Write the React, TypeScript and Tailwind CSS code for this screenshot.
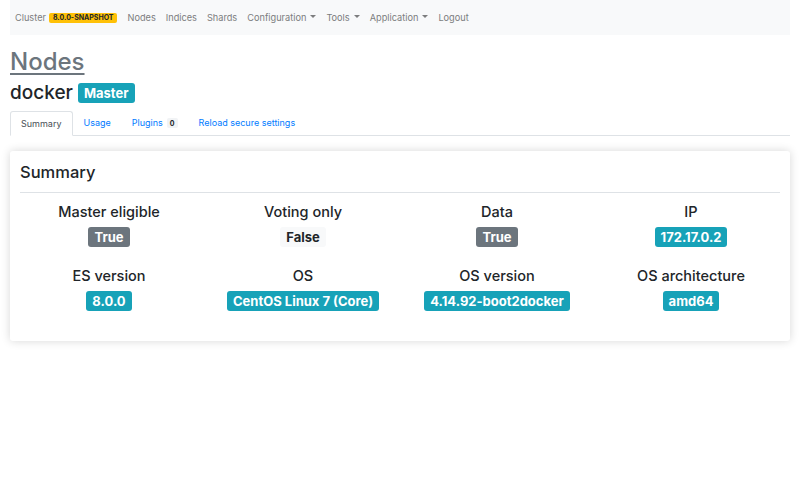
import React from "react";

const font = { fontFamily: 'Inter, "Liberation Sans", Arial, sans-serif' };

function Caret() {
  return (
    <span className="inline-block ml-[4px] w-0 h-0 border-t-[3px] border-t-current border-x-[3px] border-x-transparent align-middle relative top-[-1px]" />
  );
}

function NavLink({ children }: { children: React.ReactNode }) {
  return <span className="px-[5px] text-[9.2px] text-[#7c7d7e] flex items-center whitespace-nowrap">{children}</span>;
}

type Item = { label: string; value: string; kind: "info" | "secondary" | "light" };

function Badge({ value, kind }: { value: string; kind: Item["kind"] }) {
  const cls =
    kind === "info"
      ? "bg-[#17a2b8] text-white"
      : kind === "secondary"
      ? "bg-[#6c757d] text-white"
      : "bg-[#f8f9fa] text-[#212529]";
  return (
    <span className={`flex items-center h-[20px] px-[6px] rounded-[3px] text-[13px] font-bold leading-none ${cls}`}>
      {value}
    </span>
  );
}

function Cell({ item }: { item: Item }) {
  return (
    <div className="flex flex-col items-center">
      <div className="text-[14.5px] leading-[18px] font-medium text-[#212529]">{item.label}</div>
      <div className="mt-[6px] flex">
        <Badge value={item.value} kind={item.kind} />
      </div>
    </div>
  );
}

export default function App() {
  const row1: Item[] = [
    { label: "Master eligible", value: "True", kind: "secondary" },
    { label: "Voting only", value: "False", kind: "light" },
    { label: "Data", value: "True", kind: "secondary" },
    { label: "IP", value: "172.17.0.2", kind: "info" },
  ];
  const row2: Item[] = [
    { label: "ES version", value: "8.0.0", kind: "info" },
    { label: "OS", value: "CentOS Linux 7 (Core)", kind: "info" },
    { label: "OS version", value: "4.14.92-boot2docker", kind: "info" },
    { label: "OS architecture", value: "amd64", kind: "info" },
  ];
  return (
    <div className="w-[800px] h-[480px] bg-white px-[10px] text-[#212529]" style={font}>
      <nav className="h-[35px] pt-[1px] bg-[#f8f9fa] flex items-center">
        <NavLink>
          Cluster
          <span className="ml-[3px] flex items-center h-[10px] px-[4px] rounded-[2px] bg-[#ffc107] text-[#212529] text-[7px] font-bold leading-none">
            8.0.0-SNAPSHOT
          </span>
        </NavLink>
        <NavLink>Nodes</NavLink>
        <NavLink>Indices</NavLink>
        <NavLink>Shards</NavLink>
        <NavLink>
          Configuration
          <Caret />
        </NavLink>
        <NavLink>
          Tools
          <Caret />
        </NavLink>
        <NavLink>
          Application
          <Caret />
        </NavLink>
        <NavLink>Logout</NavLink>
      </nav>

      <h1 className="mt-[12px] text-[24px] leading-[29px] font-medium text-[#6c757d] underline decoration-[2px] underline-offset-[3px]">
        Nodes
      </h1>
      <div className="mt-[5px] flex items-center h-[24px]">
        <span className="text-[19px] leading-[24px] font-medium text-[#212529]">docker</span>
        <span className="ml-[5px] flex items-center h-[20px] px-[6px] rounded-[3px] bg-[#17a2b8] text-white text-[13px] font-bold leading-none">
          Master
        </span>
      </div>

      <div className="mt-[6px] flex h-[25px] border-b border-[#dee2e6] text-[9px]">
        <div className="h-[25px] px-[10px] flex items-center border border-[#dee2e6] border-b-white bg-white rounded-t-[3px] text-[#495057]">
          Summary
        </div>
        <div className="px-[11px] flex items-center text-[#007bff]">Usage</div>
        <div className="px-[10px] flex items-center text-[#007bff]">
          Plugins
          <span className="ml-[4px] flex items-center h-[10px] px-[3px] rounded-[2px] bg-[#f1f3f5] text-[#212529] text-[7px] font-bold leading-none">
            0
          </span>
        </div>
        <div className="px-[11px] flex items-center text-[#007bff]">Reload secure settings</div>
      </div>

      <div className="mt-[15px] bg-white rounded-[3px] shadow-[0_0_10px_rgba(0,0,0,0.16)] px-[10px] pt-[11px] pb-[30px]">
        <div className="text-[16.5px] leading-[20px] font-medium text-[#212529]">Summary</div>
        <div className="mt-[10px] h-px bg-[#dee2e6]" />
        <div className="mt-[10px] -mx-[8px] grid grid-cols-4">
          {row1.map((it) => (
            <Cell key={it.label} item={it} />
          ))}
        </div>
        <div className="mt-[20px] -mx-[8px] grid grid-cols-4">
          {row2.map((it) => (
            <Cell key={it.label} item={it} />
          ))}
        </div>
      </div>
    </div>
  );
}
